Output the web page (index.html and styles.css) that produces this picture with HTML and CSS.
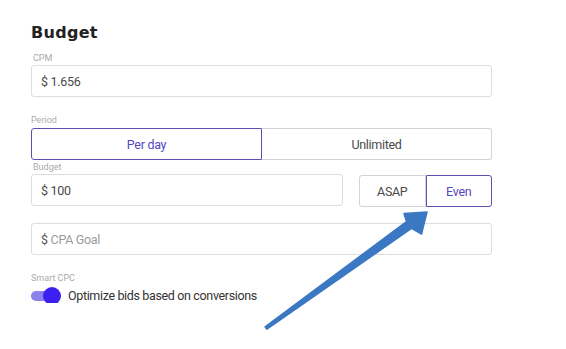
FILE: index.html
```html
<!DOCTYPE html>
<html lang="en">
<head>
  <meta charset="UTF-8">
  <title>Budget</title>
  <link rel="stylesheet" href="styles.css">
</head>
<body>
  <div id="budget">
    <h2>Budget</h2>

    <div class="label">CPM</div>
    <div class="field">$ 1.656</div>

    <div class="label gap">Period</div>
    <div class="segmented">
      <div class="seg active">Per day</div>
      <div class="seg">Unlimited</div>
    </div>

    <div class="label tight">Budget</div>
    <div class="row">
      <div class="field grow">$ 100</div>
      <div class="segmented pace">
        <div class="seg">ASAP</div>
        <div class="seg active">Even</div>
      </div>
    </div>

    <div class="field cpa"><span class="cur">$</span>&nbsp;<span class="ph">CPA Goal</span></div>

    <div class="label gap">Smart CPC</div>
    <div class="toggle-row">
      <div class="toggle"><div class="knob"></div></div>
      <span>Optimize bids based on conversions</span>
    </div>
  </div>

  <svg class="arrow" width="566" height="349" viewBox="0 0 566 349">
    <polygon points="265.1,326.8 406.5,221.6 404,213.5 427,212 421.5,234 411.5,228.4 266.9,329.2"
      fill="#3b78c3" stroke="#3b78c3" stroke-width="1.5" stroke-linejoin="round" />
  </svg>
</body>
</html>
```

FILE: styles.css
```css
body {
  margin: 0;
  background: #fff;
  font-family: Roboto, "Liberation Sans", sans-serif;
  color: #4a4a4a;
}

#budget {
  width: 461px;
  padding: 22px 0 0 31px;
}

#budget h2 {
  margin: 0;
  font-family: "DejaVu Sans", sans-serif;
  font-size: 16px;
  line-height: 22px;
  font-weight: bold;
  color: #222;
  letter-spacing: 0.3px;
}

.label {
  font-size: 9px;
  line-height: 11px;
  color: #aaa;
  margin-top: 9px;
  margin-bottom: 1px;
  padding-left: 2px;
}

.label.gap {
  margin-top: 18px;
  margin-bottom: 2px;
  padding-left: 0;
}

.label.tight {
  margin-top: 2px;
}

.field {
  box-sizing: border-box;
  height: 32px;
  border: 1px solid #ddd;
  border-radius: 3px;
  padding-left: 9px;
  display: flex;
  align-items: center;
  font-size: 12.5px;
  letter-spacing: -0.3px;
}

.segmented {
  display: flex;
  height: 32px;
}

.seg {
  flex: 1;
  box-sizing: border-box;
  border: 1px solid #d4d4d8;
  display: flex;
  align-items: center;
  justify-content: center;
  font-size: 12.5px;
  letter-spacing: -0.3px;
}

.seg:first-child {
  border-radius: 3px 0 0 3px;
}

.seg:last-child {
  border-radius: 0 3px 3px 0;
  border-left: none;
}

.seg.active {
  border: 1px solid #5b52b4;
  color: #5646c0;
}

.row {
  display: flex;
  gap: 16px;
}

.grow {
  flex: 1;
}

.pace {
  width: 133px;
  margin-top: 1px;
}

.cpa {
  margin-top: 16px;
}

.cur {
  color: #555;
}

.ph {
  color: #9a9a9a;
}

.toggle-row {
  display: flex;
  align-items: center;
  gap: 7px;
  margin-top: 4px;
  font-size: 12.5px;
  letter-spacing: -0.35px;
  color: #333;
}

.toggle {
  position: relative;
  width: 28px;
  height: 10px;
  border-radius: 5px;
  background: #8c82ec;
  margin-right: 2px;
}

.knob {
  position: absolute;
  right: -2px;
  top: -4px;
  width: 18px;
  height: 18px;
  border-radius: 50%;
  background: #3c20ef;
}

.arrow {
  position: absolute;
  left: 0;
  top: 0;
  pointer-events: none;
}
```
